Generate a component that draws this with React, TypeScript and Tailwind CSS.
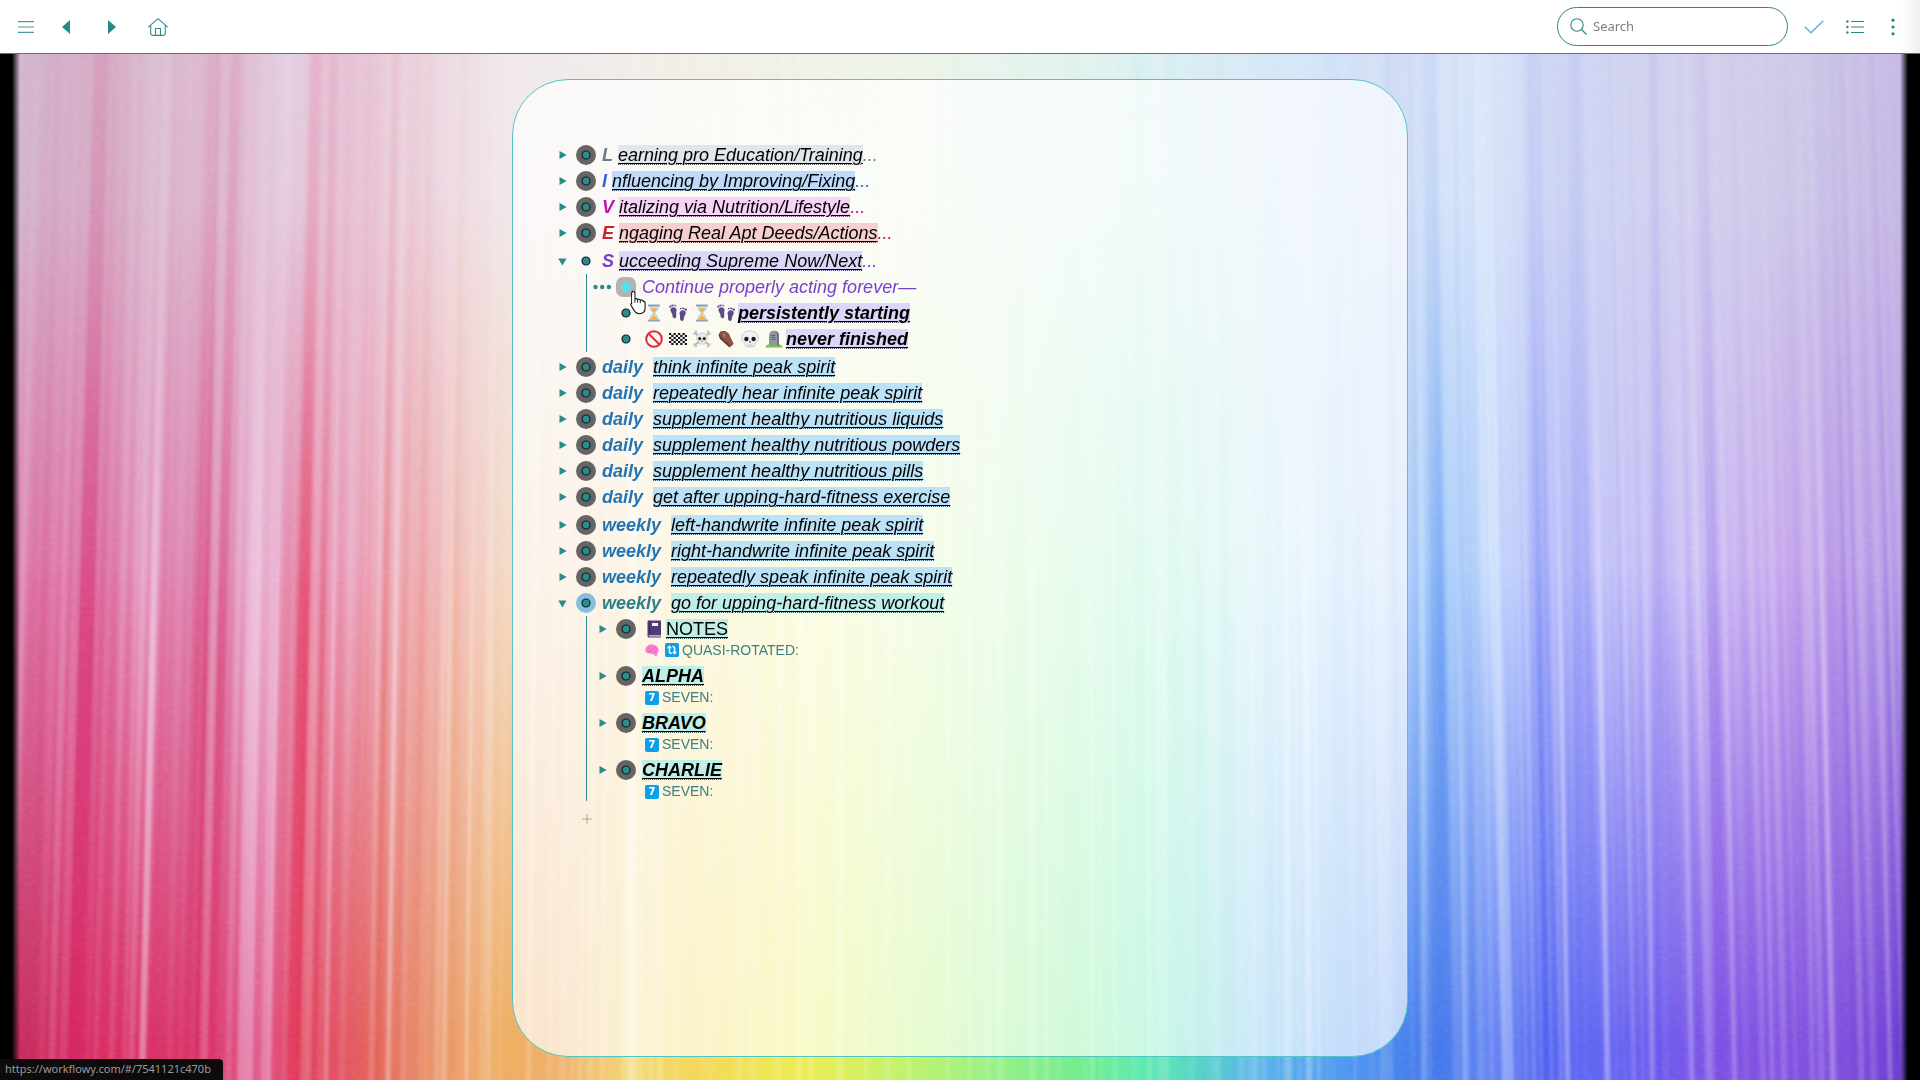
import type { ReactNode } from "react";

type Stop = [number, string];

const TOP: Stop[] = [
  [16, "#d0b6ce"], [100, "#d4aac4"], [160, "#dabdd2"], [230, "#dcb4cc"], [290, "#e2d0e2"], [330, "#e4bcd2"],
  [420, "#ead4e0"], [512, "#f0e8ec"], [700, "#f2efe8"], [900, "#eef4ea"], [1100, "#e0f2f0"], [1300, "#d4e6f8"],
  [1400, "#d0dcf6"], [1480, "#dce8fa"], [1540, "#ccd4f4"], [1700, "#d2d0ec"], [1800, "#ccc8e6"], [1900, "#c6b8e4"],
];
const MID: Stop[] = [
  [16, "#de7cae"], [90, "#dc669e"], [145, "#e294be"], [210, "#da76a6"], [260, "#e8b0d0"], [305, "#e47498"],
  [350, "#eaa4c0"], [430, "#efb0b4"], [512, "#f4dac4"], [600, "#f3d6ae"], [700, "#f6e8a8"], [830, "#f2f6b0"],
  [950, "#dcf8c0"], [1100, "#b0f4cc"], [1200, "#a8ecdc"], [1300, "#b8defa"], [1410, "#acccf8"], [1440, "#98c4fa"],
  [1490, "#cadefc"], [1545, "#a8b0fa"], [1600, "#c0c0f8"], [1700, "#cabcf4"], [1780, "#c4a4ec"], [1900, "#b498e6"],
];
const BOTTOM: Stop[] = [
  [16, "#c42c5c"], [80, "#d82860"], [200, "#d83468"], [260, "#e05488"], [300, "#e0405a"], [340, "#e25060"],
  [380, "#e46858"], [420, "#e88c68"], [500, "#eeac60"], [560, "#eeb068"], [635, "#f2d874"], [690, "#f4d658"],
  [805, "#ecec50"], [911, "#bcf26c"], [999, "#94f084"], [1087, "#6cec8c"], [1145, "#5ceab0"], [1204, "#54d0c8"],
  [1251, "#58b4e8"], [1351, "#4c94f0"], [1430, "#4276ea"], [1490, "#6484f4"], [1545, "#5060f0"], [1600, "#6064f2"],
  [1660, "#6c58ec"], [1720, "#7e50e4"], [1850, "#7c4cdc"], [1900, "#6a3ad2"],
];

/* top x, bottom x, width, colour, opacity */
const FOLDS: [number, number, number, string, number][] = [
  [102, 74, 16, "#d01c60", 0.36], [117, 92, 10, "#d01c60", 0.22], [168, 142, 7, "#f4dcf0", 0.5],
  [215, 193, 12, "#d81c5c", 0.38], [236, 210, 10, "#d81c5c", 0.34], [262, 245, 16, "#f4dcf4", 0.5],
  [284, 266, 10, "#f0d4f0", 0.45], [317, 294, 13, "#e42850", 0.45], [334, 312, 9, "#e03058", 0.25],
  [343, 326, 4, "#f8dcec", 0.5], [396, 374, 8, "#e04850", 0.28], [418, 400, 9, "#e4605c", 0.25],
  [432, 416, 8, "#e4605c", 0.2], [405, 388, 4, "#f8dce4", 0.5], [458, 444, 5, "#fbe8dc", 0.5],
  [478, 466, 4, "#fbe8dc", 0.5], [497, 488, 5, "#fbe8dc", 0.4], [634, 632, 8, "#ffffff", 0.5],
  [662, 660, 6, "#ffffff", 0.3], [1140, 1142, 14, "#38e8a0", 0.2], [1284, 1288, 8, "#ffffff", 0.35],
  [1304, 1310, 6, "#ffffff", 0.3], [1418, 1424, 6, "#d8e8ff", 0.45], [1430, 1446, 14, "#2868e8", 0.16],
  [1456, 1466, 6, "#dceaff", 0.45], [1468, 1478, 10, "#2c64ea", 0.18], [1484, 1508, 12, "#e8f4ff", 0.5],
  [1532, 1546, 16, "#3450ee", 0.24], [1552, 1568, 5, "#dcdcff", 0.45], [1572, 1582, 9, "#4050ee", 0.2],
  [1592, 1608, 5, "#e0dcff", 0.45], [1640, 1652, 5, "#dcd4ff", 0.4], [1652, 1662, 9, "#5040e4", 0.22],
  [1672, 1692, 5, "#e0d4fc", 0.45], [1694, 1712, 5, "#dcccfa", 0.35], [1700, 1722, 10, "#7038dc", 0.2],
  [1712, 1734, 4, "#dcccfa", 0.4], [1752, 1772, 4, "#dcc8f8", 0.35], [1796, 1812, 5, "#d4c0f4", 0.35],
  [1812, 1832, 5, "#d4c0f4", 0.35], [1838, 1858, 14, "#6c30d4", 0.2], [1872, 1890, 4, "#ccb4f0", 0.3],
];

function makePleats() {
  let seed = 7;
  const next = () => {
    seed = (seed * 16807) % 2147483647;
    return seed / 2147483647;
  };
  const pleats: { d: string; light: boolean; opacity: number }[] = [];
  let x = 20;
  while (x < 1896) {
    const width = 2 + next() * 5;
    const low = x + (x - 960) * 0.03;
    const light = next() > 0.4;
    pleats.push({
      d: `M${x} 0H${x + width}L${low + width} 1027H${low}Z`,
      light,
      opacity: light ? 0.06 + next() * 0.2 : 0.05 + next() * 0.18,
    });
    x += width + next() * 7;
  }
  return pleats;
}
const PLEATS = makePleats();

function Ramp({ id, stops }: { id: string; stops: Stop[] }) {
  return (
    <linearGradient id={id} gradientUnits="userSpaceOnUse" x1="0" x2="1920" y1="0" y2="0">
      {stops.map(([x, color]) => (
        <stop key={x} offset={x / 1920} stopColor={color} />
      ))}
    </linearGradient>
  );
}

function Wallpaper() {
  return (
    <svg aria-hidden="true" className="absolute inset-0 h-full w-full" viewBox="0 0 1920 1027" preserveAspectRatio="none">
      <defs>
        <Ramp id="rampTop" stops={TOP} />
        <Ramp id="rampMid" stops={MID} />
        <Ramp id="rampBottom" stops={BOTTOM} />
        <linearGradient id="fadeTop" x1="0" x2="0" y1="0" y2="1">
          <stop offset="0" stopColor="#fff" />
          <stop offset="0.14" stopColor="#eee" />
          <stop offset="0.52" stopColor="#000" />
        </linearGradient>
        <linearGradient id="fadeMid" x1="0" x2="0" y1="0" y2="1">
          <stop offset="0.5" stopColor="#fff" />
          <stop offset="0.97" stopColor="#000" />
        </linearGradient>
        <linearGradient id="fadeFold" x1="0" x2="0" y1="0" y2="1">
          <stop offset="0" stopColor="#333" />
          <stop offset="0.25" stopColor="#666" />
          <stop offset="0.6" stopColor="#fff" />
          <stop offset="1" stopColor="#bbb" />
        </linearGradient>
        <mask id="maskTop"><rect width="1920" height="1027" fill="url(#fadeTop)" /></mask>
        <mask id="maskMid"><rect width="1920" height="1027" fill="url(#fadeMid)" /></mask>
        <mask id="maskFold"><rect width="1920" height="1027" fill="url(#fadeFold)" /></mask>
        <linearGradient id="edgeLeft">
          <stop offset="0" stopColor="#000" />
          <stop offset="0.6" stopColor="#000" />
          <stop offset="1" stopColor="#000" stopOpacity="0" />
        </linearGradient>
        <linearGradient id="edgeRight">
          <stop offset="0" stopColor="#000" stopOpacity="0" />
          <stop offset="0.4" stopColor="#000" />
          <stop offset="1" stopColor="#000" />
        </linearGradient>
        <filter id="soft" x="-5%" width="110%"><feGaussianBlur stdDeviation="1.8 0" /></filter>
        <filter id="grain" x="0" y="0" width="100%" height="100%">
          <feTurbulence type="fractalNoise" baseFrequency="0.16 0.28" numOctaves="2" seed="4" />
        </filter>
      </defs>
      <rect width="1920" height="1027" fill="url(#rampBottom)" />
      <rect width="1920" height="1027" fill="url(#rampMid)" mask="url(#maskMid)" />
      <rect width="1920" height="1027" fill="url(#rampTop)" mask="url(#maskTop)" />
      <g mask="url(#maskFold)">
        <g filter="url(#soft)">
          {FOLDS.map(([top, low, w, color, opacity]) => (
            <path key={top} d={`M${top - w / 2} 0h${w}L${low + w / 2} 1027h${-w}Z`} fill={color} opacity={opacity} />
          ))}
          {PLEATS.map((p) => (
            <path
              key={p.d}
              d={p.d}
              fill={p.light ? "#fff" : "url(#rampBottom)"}
              opacity={p.opacity}
            />
          ))}
        </g>
      </g>
      <rect width="1920" height="1027" filter="url(#grain)" opacity="0.3" className="mix-blend-soft-light" />
      <rect width="20" height="1027" fill="url(#edgeLeft)" />
      <rect x="1900" width="20" height="1027" fill="url(#edgeRight)" />
    </svg>
  );
}

function Pic({ label, small, children }: { label: string; small?: boolean; children: ReactNode }) {
  return (
    <svg
      role="img"
      aria-label={label}
      viewBox="0 0 18 18"
      className={small ? "mx-[3px] inline-block h-3.5 w-3.5 align-[-2px]" : "mx-[3px] inline-block h-[18px] w-[18px] align-[-3px]"}
    >
      {children}
    </svg>
  );
}

const Hourglass = () => (
  <Pic label="hourglass">
    <path d="M4.500 2h9v3.500L10.300 9l3.200 3.500V16h-9v-3.500L7.700 9 4.500 5.500Z" fill="#bfe0f6" />
    <path d="M5.500 4.500h7L9.400 8.500v3l3.400 3.500H5.200l3.400-3.500v-3Z" fill="#ffac33" />
    <rect x="3" y="0.500" width="12" height="2" rx="0.600" fill="#8fa3b0" />
    <rect x="3" y="15.500" width="12" height="2" rx="0.600" fill="#8fa3b0" />
  </Pic>
);
const Footprints = () => (
  <Pic label="footprints">
    <g fill="#5c4b8b">
      <path d="M1.500 5.500C1.800 3.500 4 2.800 5.800 3.600 8 4.500 7.700 7 7.200 8.600c-.4 1.400.2 2.300.1 3.600-.1 1.600-1.200 2.300-2.300 2-1.500-.4-1.400-2-1.700-3.600C2.900 8.800 1.200 7.500 1.500 5.500Z" />
      <circle cx="1.300" cy="2.600" r="1.100" /><circle cx="3.200" cy="1.500" r="0.900" /><circle cx="5" cy="1.300" r="0.800" /><circle cx="6.700" cy="1.800" r="0.700" />
      <path d="M16.700 8.500c-.3-2-2.500-2.700-4.300-1.900-2.200.9-1.900 3.400-1.400 5 .3 1.200-.1 1.900 0 3 .1 1.600 1.200 2.800 2.400 2.400 1.500-.4 1.300-2 1.600-3.600.4-1.800 2-2.900 1.700-4.900Z" />
      <circle cx="16.900" cy="5.700" r="1.100" /><circle cx="15" cy="4.600" r="0.900" /><circle cx="13.200" cy="4.300" r="0.800" /><circle cx="11.500" cy="4.800" r="0.700" />
    </g>
  </Pic>
);
const Prohibited = () => (
  <Pic label="prohibited">
    <circle cx="9" cy="9" r="7.800" fill="none" stroke="#dd2e3e" strokeWidth="2" />
    <path d="M3.500 3.500 14.500 14.500" stroke="#dd2e3e" strokeWidth="2" />
  </Pic>
);
const Checkered = () => (
  <Pic label="chequered flag">
    <rect x="0" y="3" width="18" height="12" fill="#f4f4f4" />
    {[0, 1, 2, 3, 4, 5].map((r) =>
      [0, 1, 2, 3].map((c) => (
        <rect key={`${r}-${c}`} x={c * 4.5 + (r % 2) * 2.25} y={3 + r * 2} width="2.250" height="2" fill="#161616" />
      )),
    )}
  </Pic>
);
const Crossbones = () => (
  <Pic label="skull and crossbones">
    <path d="M2 3l14 12M16 3 2 15" stroke="#b5b9bd" strokeWidth="2" />
    <g fill="#c0c4c8"><circle cx="1.600" cy="3.600" r="1.400" /><circle cx="2.800" cy="2" r="1.400" /><circle cx="16.400" cy="3.600" r="1.400" /><circle cx="15.200" cy="2" r="1.400" /><circle cx="1.600" cy="14.600" r="1.400" /><circle cx="2.800" cy="16" r="1.400" /><circle cx="16.400" cy="14.600" r="1.400" /><circle cx="15.200" cy="16" r="1.400" /></g>
    <path d="M9 3c3.600 0 5.400 2.400 5.400 5 0 1.900-.9 3-2.100 3.600V14H5.700v-2.400C4.500 11 3.600 9.900 3.600 8c0-2.600 1.800-5 5.400-5Z" fill="#e8e9ea" stroke="#b5b9bd" strokeWidth="0.500" />
    <circle cx="6.700" cy="8.600" r="1.600" fill="#222" /><circle cx="11.300" cy="8.600" r="1.600" fill="#222" />
    <path d="M9 10.300l.8 1.200H8.200Z" fill="#222" />
  </Pic>
);
const Coffin = () => (
  <Pic label="coffin">
    <path d="M3.500 1.500 8 1l3.500 2.500 5 10.500-4 3.500L3 9 1.500 5Z" fill="#6b3a2e" />
    <path d="M4 1.500 8 1l3.500 2.500 4.800 9.800-2.800 2.600L4.500 7.800 2.800 4Z" fill="#8a5443" />
    <path d="M5.600 5.600 8.400 4M6.300 3.600l2 4.200" stroke="#b98a76" strokeWidth="0.900" />
  </Pic>
);
const Skull = () => (
  <Pic label="skull">
    <path d="M9 .8c5.300 0 8.300 3.300 8.300 7.400 0 2.600-1.300 4-3.300 4.700l-.5 3.100c-1 1.200-8 1.200-9 0L4 12.900C2 12.200.7 10.800.7 8.200.7 4.100 3.700.8 9 .8Z" fill="#f0f1f2" stroke="#b9bdc1" strokeWidth="0.700" />
    <circle cx="5.400" cy="9" r="2.200" fill="#1d1d1d" /><circle cx="12.600" cy="9" r="2.200" fill="#1d1d1d" />
    <path d="M9 10.800l1.100 1.700H7.900Z" fill="#1d1d1d" />
    <path d="M7.200 14v2.500M9 14v2.700M10.800 14v2.500" stroke="#b9bdc1" strokeWidth="0.700" />
  </Pic>
);
const Headstone = () => (
  <Pic label="headstone">
    <path d="M.5 17.500C1 14.500 3.500 14 9 14s8 .5 8.500 3.500Z" fill="#77c04b" />
    <path d="M4 15.500V6c0-3.300 2-5.200 5-5.200S14 2.700 14 6v9.500Z" fill="#8d979c" />
    <path d="M12 15.500V6c0-2.600-.8-4.300-2-5.100C12.500 1.200 14 3 14 6v9.500Z" fill="#6f787d" />
    <path d="M6.200 5.500h4.200M6.200 7.500h4.200M6.200 9.500h4.200" stroke="#59636a" strokeWidth="0.900" />
  </Pic>
);
const Notebook = () => (
  <Pic label="notebook">
    <path d="M2.500 1.500C2.500.9 2.900.5 3.500.5H16v17H4.200c-1 0-1.700-.6-1.700-1.500Z" fill="#543a72" />
    <path d="M4 15.300h12v1.300H4.300c-.8 0-.8-1.300-.3-1.300Z" fill="#cfd4d8" />
    <path d="M4.500.5v14.500" stroke="#3a2553" strokeWidth="0.800" />
    <rect x="7" y="3" width="6" height="3" fill="#f2eef6" />
  </Pic>
);
const Brain = () => (
  <Pic label="brain" small>
    <path d="M.5 9.500C.3 5.500 3.500 2.500 7 2c4.800-.8 9.500 1.500 10.500 6 .6 2.700-.4 4.600-2 5 .6 2-.2 4-2 4.500-1.500-2.800-3-3.500-5-3.300-1.200.2-2.200-.2-2.700-1C3 13.500.7 12.300.5 9.500Z" fill="#f97fd4" />
    <path d="M3 8c2-.5 2.600-2 2.400-3.500M6.500 10c1.800.3 3-.8 2.600-2.600M9 4c2 .2 2.600 1.400 2.400 3M12.500 5.500c1.800.4 2.600 2 2 3.500M4 11.500c1.500-1 3-.6 4 .4M11 11c1.500-.8 3-.4 4.300.8" fill="none" stroke="#e05cb0" strokeWidth="0.900" />
  </Pic>
);
const Cycle = () => (
  <Pic label="vertical arrows" small>
    <rect width="18" height="18" rx="2" fill="#0d9fe8" />
    <path d="M5.700 4.500V11c0 1.700 1 2.500 2.800 2.500M12.300 13.500V7c0-1.700-1-2.500-2.800-2.500" fill="none" stroke="#fff" strokeWidth="2" />
    <path d="M2.500 6.800 5.700 3l3.200 3.800ZM9.100 11.200l3.200 3.800 3.200-3.800Z" fill="#fff" />
  </Pic>
);
const Seven = () => (
  <span className="mx-[3px] inline-flex h-3.5 w-3.5 items-center justify-center rounded-[2px] bg-[#0d9fe8] align-[1px] font-['DejaVu_Sans',sans-serif] text-[10px] leading-none font-bold text-white">
    7
  </span>
);

type Kind = "ring" | "dot" | "focus" | "hover";

function Bullet({ kind, label }: { kind: Kind; label: string }) {
  return (
    <a href="#node" aria-label={label} className="flex w-[26px] shrink-0 items-center justify-center">
      <svg aria-hidden="true" viewBox="0 0 20 20" className="h-5 w-5">
        {kind === "hover" ? (
          <>
            <rect width="20" height="20" rx="7" fill="#b3b3b3" />
            <circle cx="10" cy="10" r="5" fill="#7fd8dc" opacity="0.7" />
            <circle cx="10" cy="10" r="3.800" fill="#40e8f4" />
          </>
        ) : (
          <>
            {kind !== "dot" && <circle cx="10" cy="10" r="10" fill={kind === "focus" ? "#86bde0" : "#666564"} />}
            <circle cx="10" cy="10" r="4" fill="#2c8c8c" stroke="#08242a" strokeWidth="1.200" />
          </>
        )}
      </svg>
    </a>
  );
}

function Toggle({ state }: { state: "closed" | "open" | "none" | "menu" }) {
  if (state === "none") return <span className="w-5 shrink-0" />;
  return (
    <button
      aria-label={state === "menu" ? "Item menu" : "Toggle children"}
      className="flex w-5 shrink-0 items-center justify-center"
    >
      <svg aria-hidden="true" viewBox="0 0 20 20" className="h-5 w-5" fill="#2b8a8a">
        {state === "closed" && <path d="M6.500 6V14L13.700 10Z" />}
        {state === "open" && <path d="M5.300 7.500h8.200L9.400 14.500Z" />}
        {state === "menu" && (
          <>
            <circle cx="2.500" cy="10" r="2.200" /><circle cx="9.200" cy="10" r="2.200" /><circle cx="15.900" cy="10" r="2.200" />
          </>
        )}
      </svg>
    </button>
  );
}

function Row({ toggle, bullet, label, children }: {
  toggle: "closed" | "open" | "none" | "menu";
  bullet: Kind;
  label: string;
  children: ReactNode;
}) {
  return (
    <div className="relative flex h-[26px] items-stretch">
      <Toggle state={toggle} />
      <Bullet kind={bullet} label={label} />
      <div className="ml-[3px] leading-[26px] whitespace-nowrap">{children}</div>
    </div>
  );
}

function Mark({ tone, bold, upright, children }: { tone: string; bold?: boolean; upright?: boolean; children: ReactNode }) {
  return (
    <a
      href="#link"
      className={`text-black underline decoration-black/60 decoration-dotted decoration-1 underline-offset-[3px] ${tone} ${bold ? "font-bold" : ""} ${upright ? "" : "italic"}`}
    >
      <span className="underline decoration-black decoration-solid decoration-1 underline-offset-2">{children}</span>
    </a>
  );
}

const PILLARS = [
  { letter: "L", text: "earning pro Education/Training", ink: "text-[#6d7b88]", tone: "bg-[#e2e6ea]" },
  { letter: "I", text: "nfluencing by Improving/Fixing", ink: "text-[#3a5fdc]", tone: "bg-[#c0dafb]" },
  { letter: "V", text: "italizing via Nutrition/Lifestyle", ink: "text-[#c012b4]", tone: "bg-[#f7d4f7]" },
  { letter: "E", text: "ngaging Real Apt Deeds/Actions", ink: "text-[#cc1f30]", tone: "bg-[#f8cfcf]" },
];
const DAILY = [
  "think infinite peak spirit",
  "repeatedly hear infinite peak spirit",
  "supplement healthy nutritious liquids",
  "supplement healthy nutritious powders",
  "supplement healthy nutritious pills",
  "get after upping-hard-fitness exercise",
];
const WEEKLY = [
  "left-handwrite infinite peak spirit",
  "right-handwrite infinite peak spirit",
  "repeatedly speak infinite peak spirit",
];
const SETS = ["ALPHA", "BRAVO", "CHARLIE"];

function Pillar({ letter, text, ink, tone }: (typeof PILLARS)[number]) {
  return (
    <>
      <b className={`italic ${ink}`}>{letter}</b> <Mark tone={tone}>{text}</Mark>
      <i className={ink}>...</i>
    </>
  );
}

function Habit({ word, text, ink, tone }: { word: string; text: string; ink: string; tone: string }) {
  return (
    <>
      <b className={`italic ${ink}`}>{word}</b>&nbsp; <Mark tone={tone}>{text}</Mark>
    </>
  );
}

function Pointer() {
  return (
    <svg aria-hidden="true" viewBox="0 0 16 25" className="pointer-events-none absolute top-4 left-[37px] z-10 h-[25px] w-4">
      <path
        d="M3.200 1.200c1.100 0 1.700.8 1.700 1.800v6.200c.4-.9 2.500-.8 2.700.5.500-.8 2.500-.6 2.700.7.600-.7 2.700-.4 2.900 1 .6-.3 1.900.2 1.900 1.700v5c0 3.400-2 5.600-5.600 5.600-3 0-4.400-1.300-5.600-3.600L1 15.200c-.7-1.400.9-2.500 2-1.300"
        fill="#fff" stroke="#111" strokeWidth="1.100" strokeLinejoin="round"
      />
      <path d="M3.200 1.200C2.200 1.200 1.700 2 1.700 3v10.800" fill="none" stroke="#111" strokeWidth="1.100" />
      <path d="M2.200 3h2v11h-2Z" fill="#fff" />
      <path d="M4.900 9.200v3.600M7.600 9.800v3M10.300 10.600v2.600" stroke="#111" strokeWidth="0.900" />
    </svg>
  );
}

function Header() {
  return (
    <header className="relative z-10 flex h-[54px] shrink-0 items-center justify-between border-b border-[#2e8585] bg-linear-to-r from-white from-[99%] to-[#eeeeee] pr-[19px] pl-4 text-[#2a8585]">
      <nav className="flex items-center">
        <button aria-label="Open menu" className="flex h-8 w-5 items-center justify-center">
          <svg viewBox="0 0 16 12" className="h-3 w-4" stroke="#4b9a98" strokeWidth="1.100"><path d="M0 .6h16M0 6h16M0 11.400h16" /></svg>
        </button>
        <button aria-label="Back" className="ml-5 flex h-8 w-5 items-center justify-center">
          <svg viewBox="0 0 8 14" className="h-3.5 w-2" fill="#258c8c"><path d="M8 0v14L0 7Z" /></svg>
        </button>
        <button aria-label="Forward" className="ml-[26px] flex h-8 w-5 items-center justify-center">
          <svg viewBox="0 0 8 14" className="h-3.5 w-2" fill="#258c8c"><path d="M0 0v14l8-7Z" /></svg>
        </button>
        <a href="#home" aria-label="Home" className="ml-[26px] flex h-8 w-5 items-center justify-center">
          <svg viewBox="0 0 20 18" className="h-[18px] w-5" fill="none" stroke="#2f8b8a" strokeWidth="1.100" strokeLinejoin="round" strokeLinecap="round">
            <path d="M.6 8.800 10 .7l9.400 8.100M2.700 7.500v8c0 1.200.7 1.900 1.900 1.900h10.800c1.200 0 1.900-.7 1.900-1.900v-8M7.500 17.300v-6.800h5v6.800" />
          </svg>
        </a>
      </nav>
      <div className="flex items-center">
        <label className="flex h-[39px] w-[231px] items-center rounded-full border border-[#2e8585] bg-white pl-3">
          <svg aria-hidden="true" viewBox="0 0 17 17" className="h-[17px] w-[17px] shrink-0" fill="none" stroke="#2e8585" strokeWidth="1.100">
            <circle cx="7" cy="7" r="6.200" /><path d="m11.500 11.500 5 5" />
          </svg>
          <input
            type="text"
            aria-label="Search"
            placeholder="Search"
            className="ml-1.5 w-40 bg-transparent font-['Noto_Sans',sans-serif] text-[13px] text-gray-700 outline-none placeholder:text-[#808080]"
          />
        </label>
        <button aria-label="Completed items" className="ml-4 flex h-8 w-5 items-center justify-center">
          <svg viewBox="0 0 20 14" className="h-3.5 w-5" fill="none" stroke="#4fb0dd" strokeWidth="1.300"><path d="m.7 6.800 6.300 6L19.300.7" /></svg>
        </button>
        <button aria-label="List view" className="ml-[21px] flex h-8 w-5 items-center justify-center">
          <svg viewBox="0 0 18 14" className="h-3.5 w-[18px]" stroke="#2e8585" strokeWidth="1.100" fill="#2e8585">
            <path d="M5 1.500h13M5 7h13M5 12.500h13" />
            <g stroke="none"><circle cx="1.400" cy="1.500" r="1.200" /><circle cx="1.400" cy="7" r="1.200" /><circle cx="1.400" cy="12.500" r="1.200" /></g>
          </svg>
        </button>
        <button aria-label="More options" className="ml-5 flex h-8 w-4 items-center justify-center">
          <svg viewBox="0 0 4 18" className="h-[18px] w-1" fill="#2a8585"><circle cx="2" cy="2.200" r="1.600" /><circle cx="2" cy="9" r="1.600" /><circle cx="2" cy="15.800" r="1.600" /></svg>
        </button>
      </div>
    </header>
  );
}

export default function App() {
  return (
    <div className="flex min-h-screen flex-col bg-white">
      <Header />
      <main className="relative flex flex-1 justify-center overflow-hidden px-6 pt-[25px] pb-[23px]">
        <Wallpaper />
        <section
          aria-label="Outline"
          className="relative flex w-full max-w-[896px] flex-col gap-0.5 rounded-[56px] border border-[#52c4c4] bg-white/67 px-10 pt-[62px] pb-10 font-['Liberation_Sans',Arial,sans-serif] text-[18px]"
        >
          <div>
            {PILLARS.map((p) => (
              <Row key={p.letter} toggle="closed" bullet="ring" label={p.text}>
                <Pillar {...p} />
              </Row>
            ))}
          </div>
          <div>
            <Row toggle="open" bullet="dot" label="Succeeding">
              <Pillar letter="S" text="ucceeding Supreme Now/Next" ink="text-[#7a3fd0]" tone="bg-[#dcd6f8]" />
            </Row>
            <div className="ml-[33px] border-l border-[#2e8b8b] pl-1.5">
              <div className="relative">
                <Row toggle="menu" bullet="hover" label="Continue">
                  <i className="text-[#7a3fd0]">Continue properly acting forever—</i>
                </Row>
                <Pointer />
              </div>
              <Row toggle="none" bullet="dot" label="Persistently starting">
                <Hourglass /><Footprints /><Hourglass /><Footprints />
                <Mark tone="bg-[#dcd6f8]" bold>persistently starting</Mark>
              </Row>
              <Row toggle="none" bullet="dot" label="Never finished">
                <Prohibited /><Checkered /><Crossbones /><Coffin /><Skull /><Headstone />
                <Mark tone="bg-[#dcd6f8]" bold>never finished</Mark>
              </Row>
            </div>
          </div>
          <div>
            {DAILY.map((text) => (
              <Row key={text} toggle="closed" bullet="ring" label={text}>
                <Habit word="daily" text={text} ink="text-[#2474b4]" tone="bg-[#bce2f8]" />
              </Row>
            ))}
          </div>
          <div>
            {WEEKLY.map((text) => (
              <Row key={text} toggle="closed" bullet="ring" label={text}>
                <Habit word="weekly" text={text} ink="text-[#2474b4]" tone="bg-[#bce2f8]" />
              </Row>
            ))}
            <Row toggle="open" bullet="focus" label="Workout">
              <Habit word="weekly" text="go for upping-hard-fitness workout" ink="text-[#2c7f88]" tone="bg-[#c0efe8]" />
            </Row>
            <div className="ml-[33px] flex flex-col gap-[3px] border-l border-[#2e8b8b] pl-1.5 text-[#3c7f84]">
              <div>
                <Row toggle="closed" bullet="ring" label="Notes">
                  <Notebook />
                  <Mark tone="bg-[#c0efe8]" upright>NOTES</Mark>
                </Row>
                <p className="ml-[49px] h-[18px] text-[14px] leading-[16px]">
                  <Brain /><Cycle />QUASI-ROTATED:
                </p>
              </div>
              {SETS.map((name) => (
                <div key={name}>
                  <Row toggle="closed" bullet="ring" label={name}>
                    <Mark tone="bg-[#c0efe8]" bold>{name}</Mark>
                  </Row>
                  <p className="ml-[49px] h-[18px] text-[14px] leading-[16px]">
                    <Seven />SEVEN:
                  </p>
                </div>
              ))}
            </div>
          </div>
          <button aria-label="Add item" className="mt-2 ml-[26px] flex h-4 w-4 items-center justify-center">
            <svg viewBox="0 0 10 10" className="h-2.5 w-2.5" stroke="#b0a89c" strokeWidth="1"><path d="M5 0v10M0 5h10" /></svg>
          </button>
        </section>
      </main>
      <div className="fixed bottom-0 left-0 z-20 flex h-[21px] items-center rounded-tr-sm bg-[#0e0b0c] pr-3 pl-[5px] font-['Noto_Sans',sans-serif] text-[11px] text-[#9a9a9a]">
        https://workflowy.com/#/7541121c470b
      </div>
    </div>
  );
}
